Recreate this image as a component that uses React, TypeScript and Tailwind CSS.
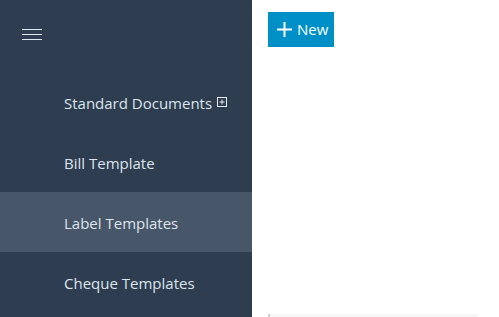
import { FC } from "react";

const navItems = [
  { label: "Standard Documents", expandable: true },
  { label: "Bill Template" },
  { label: "Label Templates", active: true },
  { label: "Cheque Templates" },
];

const App: FC = () => {
  return (
    <div className="flex h-[317px] w-[499px] overflow-hidden bg-white font-['Open_Sans',sans-serif]">
      {/* Sidebar */}
      <aside className="flex w-[252px] shrink-0 flex-col bg-[#2e3e50]">
        <div className="h-[72px] shrink-0 pl-[22px] pt-[29px]">
          <div className="flex w-5 flex-col gap-[4px]">
            <span className="h-[1px] w-5 bg-[#dfe8f2]" />
            <span className="h-[1px] w-5 bg-[#dfe8f2]" />
            <span className="h-[1px] w-5 bg-[#dfe8f2]" />
          </div>
        </div>

        {navItems.map((item) => (
          <div
            key={item.label}
            className={`flex h-[60px] shrink-0 items-center pl-16 pt-[2px] text-[15px] text-[#dde4ec] ${
              item.active ? "bg-[#48566a]" : ""
            }`}
          >
            <span>{item.label}</span>
            {item.expandable && (
              <svg
                width="10"
                height="10"
                viewBox="0 0 10 10"
                className="ml-[5px] -mt-[2px]"
                fill="none"
                stroke="#e6ecf2"
                strokeWidth="1"
              >
                <rect x="0.5" y="0.5" width="9" height="9" />
                <path d="M5 2.5v5M2.5 5h5" />
              </svg>
            )}
          </div>
        ))}
      </aside>

      {/* Main */}
      <main className="flex flex-1 flex-col pl-4 pr-[21px] pt-3">
        <button className="flex h-[35px] w-[66px] shrink-0 items-center gap-[5px] bg-[#0090c8] pl-[9px] text-[15px] text-white">
          <svg width="15" height="15" viewBox="0 0 15 15" stroke="white" strokeWidth="2">
            <path d="M7.5 0v15M0 7.5h15" />
          </svg>
          <span>New</span>
        </button>

        <div className="mt-[267px] h-4 shrink-0 border-l-2 border-[#d0d0d0] bg-[#f6f6f6]" />
      </main>
    </div>
  );
};

export default App;
